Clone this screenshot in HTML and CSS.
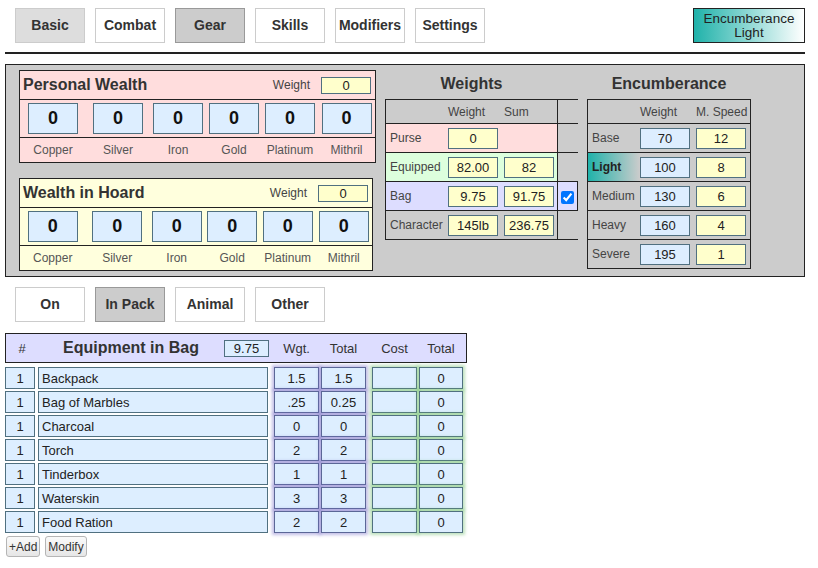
FILE: index.html
```html
<!DOCTYPE html>
<html>
<head>
<meta charset="utf-8">
<title>Gear</title>
<link rel="stylesheet" href="styles.css">
</head>
<body>
<div class="page">
  <div class="nav">
    <div class="tabs">
      <button class="tab tab-soft">Basic</button>
      <button class="tab">Combat</button>
      <button class="tab tab-active">Gear</button>
      <button class="tab">Skills</button>
      <button class="tab">Modifiers</button>
      <button class="tab">Settings</button>
    </div>
    <div class="badge"><span class="badge-line">Encumberance</span><span class="badge-line">Light</span></div>
  </div>
  <div class="rule"></div>

  <div class="panel">
    <div class="wealth-col">
      <div class="wealth wealth-personal">
        <div class="w-head"><span class="w-title">Personal Wealth</span><span class="w-label">Weight</span><div class="field f-yellow w-weight">0</div></div>
        <div class="w-coins">
          <div class="field f-blue coin">0</div><div class="field f-blue coin">0</div><div class="field f-blue coin">0</div><div class="field f-blue coin">0</div><div class="field f-blue coin">0</div><div class="field f-blue coin">0</div>
        </div>
        <div class="w-names"><span>Copper</span><span>Silver</span><span>Iron</span><span>Gold</span><span>Platinum</span><span>Mithril</span></div>
      </div>
      <div class="wealth wealth-hoard">
        <div class="w-head"><span class="w-title">Wealth in Hoard</span><span class="w-label">Weight</span><div class="field f-yellow w-weight">0</div></div>
        <div class="w-coins">
          <div class="field f-blue coin">0</div><div class="field f-blue coin">0</div><div class="field f-blue coin">0</div><div class="field f-blue coin">0</div><div class="field f-blue coin">0</div><div class="field f-blue coin">0</div>
        </div>
        <div class="w-names"><span>Copper</span><span>Silver</span><span>Iron</span><span>Gold</span><span>Platinum</span><span>Mithril</span></div>
      </div>
    </div>

    <div class="weights">
      <div class="sec-title wt-title">Weights</div>
      <div class="wt-table">
        <div class="wt-row wt-head">
          <div class="wt-main"><span class="wt-label"></span><span class="wt-h">Weight</span><span class="wt-h">Sum</span></div>
          <div class="wt-check"></div>
        </div>
        <div class="wt-row wt-purse">
          <div class="wt-main"><span class="wt-label">Purse</span><div class="field f-yellow wt-val">0</div></div>
          <div class="wt-check"></div>
        </div>
        <div class="wt-row wt-equipped">
          <div class="wt-main"><span class="wt-label">Equipped</span><div class="field f-yellow wt-val">82.00</div><div class="field f-yellow wt-val">82</div></div>
          <div class="wt-check"></div>
        </div>
        <div class="wt-row wt-bag">
          <div class="wt-main"><span class="wt-label">Bag</span><div class="field f-yellow wt-val">9.75</div><div class="field f-yellow wt-val">91.75</div></div>
          <div class="wt-check"><input class="chk" type="checkbox" checked></div>
        </div>
        <div class="wt-row">
          <div class="wt-main"><span class="wt-label">Character</span><div class="field f-yellow wt-val">145lb</div><div class="field f-yellow wt-val">236.75</div></div>
          <div class="wt-check"></div>
        </div>
      </div>
    </div>

    <div class="enc">
      <div class="sec-title">Encumberance</div>
      <div class="en-table">
        <div class="en-row en-head"><span class="en-label"></span><span class="en-h">Weight</span><span class="en-h">M. Speed</span></div>
        <div class="en-row"><span class="en-label">Base</span><div class="field f-blue en-val">70</div><div class="field f-yellow en-val">12</div></div>
        <div class="en-row"><span class="en-label en-light">Light</span><div class="field f-blue en-val">100</div><div class="field f-yellow en-val">8</div></div>
        <div class="en-row"><span class="en-label">Medium</span><div class="field f-blue en-val">130</div><div class="field f-yellow en-val">6</div></div>
        <div class="en-row"><span class="en-label">Heavy</span><div class="field f-blue en-val">160</div><div class="field f-yellow en-val">4</div></div>
        <div class="en-row"><span class="en-label">Severe</span><div class="field f-blue en-val">195</div><div class="field f-yellow en-val">1</div></div>
      </div>
    </div>
  </div>

  <div class="tabs tabs2">
    <button class="tab">On</button>
    <button class="tab tab-active">In Pack</button>
    <button class="tab">Animal</button>
    <button class="tab">Other</button>
  </div>

  <div class="eq-head">
    <span class="eh-hash">#</span>
    <span class="eh-title">Equipment in Bag</span>
    <div class="field f-blue eh-input">9.75</div>
    <span class="eh-col eh-wgt">Wgt.</span>
    <span class="eh-col eh-tot">Total</span>
    <span class="eh-col eh-cost">Cost</span>
    <span class="eh-col eh-tot2">Total</span>
  </div>

  <div class="eq-rows">
    <div class="eq-row"><div class="cell c-qty">1</div><div class="cell c-name">Backpack</div><div class="cell c-wgt">1.5</div><div class="cell c-tot">1.5</div><div class="cell c-cost"></div><div class="cell c-tot2">0</div></div>
    <div class="eq-row"><div class="cell c-qty">1</div><div class="cell c-name">Bag of Marbles</div><div class="cell c-wgt">.25</div><div class="cell c-tot">0.25</div><div class="cell c-cost"></div><div class="cell c-tot2">0</div></div>
    <div class="eq-row"><div class="cell c-qty">1</div><div class="cell c-name">Charcoal</div><div class="cell c-wgt">0</div><div class="cell c-tot">0</div><div class="cell c-cost"></div><div class="cell c-tot2">0</div></div>
    <div class="eq-row"><div class="cell c-qty">1</div><div class="cell c-name">Torch</div><div class="cell c-wgt">2</div><div class="cell c-tot">2</div><div class="cell c-cost"></div><div class="cell c-tot2">0</div></div>
    <div class="eq-row"><div class="cell c-qty">1</div><div class="cell c-name">Tinderbox</div><div class="cell c-wgt">1</div><div class="cell c-tot">1</div><div class="cell c-cost"></div><div class="cell c-tot2">0</div></div>
    <div class="eq-row"><div class="cell c-qty">1</div><div class="cell c-name">Waterskin</div><div class="cell c-wgt">3</div><div class="cell c-tot">3</div><div class="cell c-cost"></div><div class="cell c-tot2">0</div></div>
    <div class="eq-row"><div class="cell c-qty">1</div><div class="cell c-name">Food Ration</div><div class="cell c-wgt">2</div><div class="cell c-tot">2</div><div class="cell c-cost"></div><div class="cell c-tot2">0</div></div>
  </div>

  <div class="eq-actions">
    <button class="btn">+Add</button>
    <button class="btn">Modify</button>
  </div>
</div>
</body>
</html>
```

FILE: styles.css
```css
body {
  margin: 0;
  background: #fff;
  color: #333;
  font-family: "Liberation Sans", Arial, sans-serif;
}

.page {
  width: 800px;
  padding: 8px 0 0 5px;
}

/* top navigation */
.nav {
  display: flex;
  justify-content: space-between;
  height: 35px;
}

.tabs {
  display: flex;
  gap: 10px;
  padding-left: 10px;
}

.tab {
  width: 70px;
  height: 35px;
  box-sizing: border-box;
  padding: 0 0 1px 0;
  border: 1px solid #ccc;
  background: #fff;
  color: #333;
  font: bold 14px "Liberation Sans", Arial, sans-serif;
  display: flex;
  align-items: center;
  justify-content: center;
}

.tab-soft { background: #ddd; }
.tab-active { background: #ccc; border-color: #999; }

.badge {
  width: 112px;
  height: 35px;
  box-sizing: border-box;
  border: 1px solid #222;
  background: linear-gradient(to right, #20b2aa, #ffffff);
  color: #222;
  text-align: center;
  display: flex;
  flex-direction: column;
  justify-content: center;
}

.badge-line {
  display: block;
  height: 14px;
  font-size: 13.5px;
  line-height: 14px;
}

.rule {
  margin-top: 9px;
  width: 800px;
  border-top: 2px solid #222;
}

/* main panel */
.panel {
  margin-top: 10px;
  width: 800px;
  box-sizing: border-box;
  border: 1px solid #222;
  background: #ccc;
  padding: 5px 13px;
  display: flex;
  align-items: flex-start;
}

.wealth-col {
  display: flex;
  flex-direction: column;
  gap: 15px;
}

.wealth {
  width: 357px;
  box-sizing: border-box;
  border: 1px solid #222;
}

.wealth-personal { background: #fdd; }
.wealth-hoard { background: #ffd; width: 354px; }

.w-head {
  height: 28px;
  display: flex;
  align-items: center;
  padding: 0 4px 0 3px;
  border-bottom: 1px solid #222;
}

.w-title {
  flex: 1;
  font-weight: bold;
  font-size: 16px;
  color: #333;
}

.w-label {
  font-size: 12px;
  color: #444;
  margin-right: 11px;
}

.field {
  box-sizing: border-box;
  border: 1px solid #507080;
  display: flex;
  align-items: center;
  justify-content: center;
  font-size: 13px;
  color: #222;
}

.f-yellow { background: #ffc; }
.f-blue { background: #def; }

.w-weight { width: 50px; height: 17px; }

.w-coins,
.w-names {
  display: grid;
  grid-template-columns: 66fr 64fr 56fr 56fr 56fr 57fr;
  align-items: center;
  justify-items: center;
}

.w-coins {
  height: 37px;
  border-bottom: 1px solid #222;
}

.coin {
  width: 50px;
  height: 31px;
  font-weight: bold;
  font-size: 18px;
  color: #111;
}

.w-names {
  height: 24px;
  font-size: 12px;
  color: #555;
}

/* section titles */
.sec-title {
  height: 29px;
  line-height: 28px;
  font-weight: bold;
  font-size: 16px;
  color: #333;
  text-align: center;
}

/* weights */
.weights {
  margin-left: 9px;
  width: 193px;
}

.wt-title { width: 173px; }

.wt-table { border-top: 1px solid #222; }

.wt-row {
  display: flex;
  height: 28px;
  border-bottom: 1px solid #222;
}

.wt-head { height: 23px; }

.wt-main {
  width: 173px;
  box-sizing: border-box;
  border-left: 1px solid #222;
  border-right: 1px solid #222;
  display: flex;
  align-items: center;
  padding-right: 3px;
}

.wt-check {
  width: 20px;
  box-sizing: border-box;
  display: flex;
  align-items: center;
  justify-content: center;
}

.wt-purse .wt-main { background: #fdd; }
.wt-equipped .wt-main { background: #dfd; }
.wt-bag .wt-main,
.wt-bag .wt-check { background: #ddf; }
.wt-bag .wt-check { border-right: 1px solid #222; }

.wt-label {
  width: 62px;
  box-sizing: border-box;
  padding-left: 4px;
  font-size: 12px;
  color: #444;
}

.wt-h {
  width: 50px;
  font-size: 12px;
  color: #444;
}

.wt-h + .wt-h,
.wt-val + .wt-val { margin-left: 6px; }

.wt-val { width: 50px; height: 21px; }

.chk {
  width: 13px;
  height: 13px;
  margin: 2px 0 0 0;
}

/* encumbrance */
.enc {
  margin-left: 9px;
  width: 164px;
}

.en-table {
  border: 1px solid #222;
  border-bottom: none;
}

.en-row {
  display: flex;
  align-items: center;
  height: 28px;
  border-bottom: 1px solid #222;
}

.en-head { height: 23px; }

.en-label {
  width: 52px;
  box-sizing: border-box;
  padding-left: 4px;
  align-self: stretch;
  display: flex;
  align-items: center;
  font-size: 12px;
  color: #444;
}

.en-light {
  background: linear-gradient(to right, #20b2aa, rgba(32, 178, 170, 0));
  font-weight: bold;
  color: #222;
}

.en-h {
  width: 50px;
  font-size: 12px;
  color: #444;
  white-space: nowrap;
}

.en-h + .en-h,
.en-val + .en-val { margin-left: 6px; }

.en-val { width: 50px; height: 21px; }

/* lower tabs */
.tabs2 {
  margin-top: 10px;
  height: 35px;
}

/* equipment */
.eq-head {
  margin-top: 11px;
  width: 462px;
  height: 30px;
  box-sizing: border-box;
  border: 1px solid #222;
  background: #ddf;
  display: flex;
  align-items: center;
  font-size: 13px;
  color: #333;
}

.eh-hash { width: 32px; text-align: center; }

.eh-title {
  width: 186px;
  text-align: center;
  font-weight: bold;
  font-size: 16px;
  color: #333;
}

.eh-input { width: 45px; height: 17px; }

.eh-col { text-align: center; }
.eh-wgt { width: 45px; margin-left: 5px; }
.eh-tot { width: 45px; margin-left: 2px; }
.eh-cost { width: 45px; margin-left: 6px; }
.eh-tot2 { width: 44px; margin-left: 2px; }

.eq-rows {
  margin-top: 4px;
  display: flex;
  flex-direction: column;
  gap: 2px;
}

.eq-row {
  display: flex;
  height: 22px;
}

.cell {
  height: 22px;
  box-sizing: border-box;
  border: 1px solid #507080;
  background: #def;
  font-size: 13px;
  color: #222;
  display: flex;
  align-items: center;
  justify-content: center;
}

.c-qty { width: 30px; }

.c-name {
  width: 230px;
  margin-left: 3px;
  padding-left: 3px;
  justify-content: flex-start;
}

.c-wgt,
.c-tot {
  width: 45px;
  border-color: #5b6797;
  box-shadow: 0 0 3px 2px rgba(120, 110, 200, 0.45);
}

.c-wgt { margin-left: 6px; }
.c-tot { margin-left: 2px; }

.c-cost,
.c-tot2 {
  box-shadow: 0 0 3px 2px rgba(110, 190, 110, 0.45);
}

.c-cost { width: 45px; margin-left: 6px; }
.c-tot2 { width: 44px; margin-left: 2px; }

.eq-actions {
  margin-top: 3px;
  padding-left: 1px;
  display: flex;
  gap: 5px;
}

.btn {
  height: 21px;
  box-sizing: border-box;
  padding: 0 2px;
  border: 1px solid #b5b5b5;
  border-radius: 3px;
  background: linear-gradient(#fafafa, #e6e6e6);
  color: #333;
  font: 12px "Liberation Sans", Arial, sans-serif;
}
```
